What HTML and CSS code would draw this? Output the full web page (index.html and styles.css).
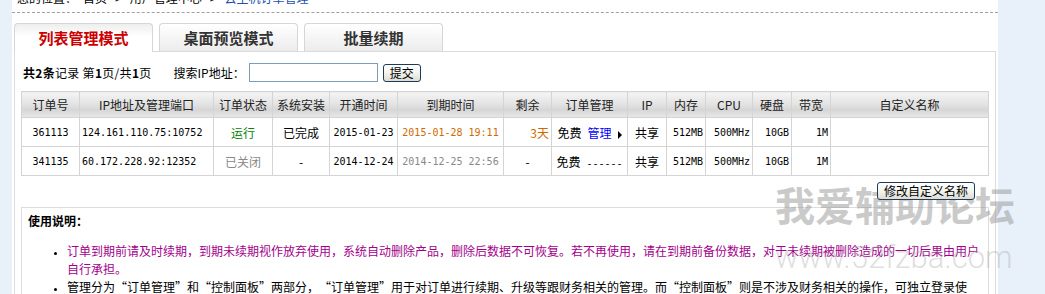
FILE: index.html
```html
<!DOCTYPE html>
<html lang="zh-CN">
  <head>
    <meta charset="UTF-8" />
    <title>云主机订单管理</title>
    <link rel="stylesheet" href="styles.css">
  </head>
  <body>
    <div class="main">
      <div class="crumb">
        <div class="crumb-text">
          您的位置：<span class="home">首页</span><span class="sep">&gt;</span>用户管理中心<span class="sep">&gt;</span><a href="#">云主机订单管理</a>
        </div>
      </div>

      <div class="tabs">
        <a class="tab active" href="#">列表管理模式</a>
        <a class="tab" href="#">桌面预览模式</a>
        <a class="tab" href="#">批量续期</a>
      </div>

      <div class="panel">
        <form class="toolbar" id="searchForm">
          <span class="pages"><b>共2条</b>记录 第<b>1</b>页/共<b>1</b>页</span>
          <label for="ip" class="search-label">搜索IP地址：</label>
          <input type="text" id="ip" />
          <button type="submit" class="btn">提交</button>
        </form>

        <table class="orders">
          <colgroup>
            <col class="c-id" />
            <col class="c-ip" />
            <col class="c-state" />
            <col class="c-os" />
            <col class="c-open" />
            <col class="c-due" />
            <col class="c-left" />
            <col class="c-manage" />
            <col class="c-ipt" />
            <col class="c-mem" />
            <col class="c-cpu" />
            <col class="c-disk" />
            <col class="c-bw" />
            <col class="c-name" />
          </colgroup>
          <thead>
            <tr>
              <th>订单号</th>
              <th>IP地址及管理端口</th>
              <th>订单状态</th>
              <th>系统安装</th>
              <th>开通时间</th>
              <th>到期时间</th>
              <th>剩余</th>
              <th>订单管理</th>
              <th>IP</th>
              <th>内存</th>
              <th>CPU</th>
              <th>硬盘</th>
              <th>带宽</th>
              <th>自定义名称</th>
            </tr>
          </thead>
          <tbody>
            <tr>
              <td class="num">361113</td>
              <td class="num left">124.161.110.75:10752</td>
              <td class="running">运行</td>
              <td>已完成</td>
              <td class="num">2015-01-23</td>
              <td class="num due">2015-01-28 19:11</td>
              <td class="right due">3天</td>
              <td>免费<a href="#" class="manage">管理</a><i class="arrow"></i></td>
              <td>共享</td>
              <td class="num right">512MB</td>
              <td class="num right">500MHz</td>
              <td class="num right">10GB</td>
              <td class="num right">1M</td>
              <td></td>
            </tr>
            <tr>
              <td class="num">341135</td>
              <td class="num left">60.172.228.92:12352</td>
              <td class="closed">已关闭</td>
              <td>-</td>
              <td class="num">2014-12-24</td>
              <td class="num closed">2014-12-25 22:56</td>
              <td>-</td>
              <td>免费<span class="num dashes">------</span></td>
              <td>共享</td>
              <td class="num right">512MB</td>
              <td class="num right">500MHz</td>
              <td class="num right">10GB</td>
              <td class="num right">1M</td>
              <td></td>
            </tr>
          </tbody>
        </table>

        <div class="actions">
          <button type="button" class="btn">修改自定义名称</button>
        </div>

        <div class="notice">
          <h4>使用说明：</h4>
          <ul>
            <li class="warn">订单到期前请及时续期，到期未续期视作放弃使用，系统自动删除产品，删除后数据不可恢复。若不再使用，请在到期前备份数据，对于未续期被删除造成的一切后果由用户自行承担。</li>
            <li>管理分为“订单管理”和“控制面板”两部分，“订单管理”用于对订单进行续期、升级等跟财务相关的管理。而“控制面板”则是不涉及财务相关的操作，可独立登录使用。</li>
          </ul>
        </div>
      </div>
    </div>

    <div class="watermark">
      <span class="wm-title">我爱辅助论坛</span>
      <span class="wm-url">www.52fzba.com</span>
    </div>

    <script>
      document.getElementById("searchForm").addEventListener("submit", function (e) {
        e.preventDefault();
      });
    </script>
  </body>
</html>
```

FILE: styles.css
```css
* {
  box-sizing: border-box;
  margin: 0;
  padding: 0;
}

html {
  overflow: hidden;
}

body {
  font-family: "Noto Sans CJK SC", sans-serif;
  font-size: 12px;
  color: #000;
  background: #e8f0fa;
}

a {
  text-decoration: none;
}

.main {
  width: 986px;
  min-height: 100vh;
  margin-left: 12px;
  background: #fff;
}

/* breadcrumb, only its lower edge is visible */
.crumb {
  display: flex;
  height: 13px;
  padding-left: 5px;
  border-bottom: 1px dashed #a0a0a0;
}

.crumb-text {
  margin-top: -8px;
  line-height: 12px;
  white-space: nowrap;
}

.crumb-text a {
  color: #1d4fb0;
}

.crumb .home {
  margin-left: 6px;
}

.crumb .sep {
  margin: 0 8px;
}

/* tabs */
.tabs {
  position: relative;
  z-index: 1;
  display: flex;
  align-items: flex-end;
  gap: 6px;
  padding: 10px 0 0 2px;
}

.tab {
  width: 139px;
  height: 28px;
  border: 1px solid #d6d6d6;
  border-bottom: none;
  border-radius: 4px 4px 0 0;
  background: linear-gradient(#fff, #ececec);
  color: #333;
  font-size: 15px;
  font-weight: bold;
  line-height: 27px;
  text-align: center;
}

.tab.active {
  height: 29px;
  margin-bottom: -1px;
  background: linear-gradient(#eeeeee, #fff 45%);
  color: #cc0000;
}

.panel {
  margin: 0 2px 0 2px;
  padding: 0 6px 30px;
  border: 1px solid #dcdcdc;
  min-height: 300px;
}

/* search line */
.toolbar {
  display: flex;
  align-items: center;
  height: 19px;
  margin-top: 11px;
}

.pages {
  margin-left: 2px;
  letter-spacing: 0.3px;
}

.search-label {
  margin-left: 22px;
}

.toolbar input {
  width: 129px;
  height: 19px;
  margin-left: 4px;
  padding: 0 2px;
  border: 1px solid #7f9db9;
  font-size: 12px;
}

.btn {
  position: relative;
  z-index: 2;
  height: 18px;
  padding: 0 6px;
  border: 1px solid #1e3c5a;
  border-radius: 3px;
  background: linear-gradient(#ffffff, #f4f4ef 50%, #dcdcd5);
  font-family: "Noto Sans CJK SC", sans-serif;
  font-size: 12px;
  line-height: 16px;
  color: #000;
  cursor: pointer;
}

.toolbar .btn {
  margin-left: 5px;
}

/* order table */
.orders {
  width: 967px;
  margin-top: 9px;
  border-collapse: collapse;
  table-layout: fixed;
}

.c-id { width: 58px; }
.c-ip { width: 134px; }
.c-state { width: 59px; }
.c-os { width: 57px; }
.c-open { width: 68px; }
.c-due { width: 106px; }
.c-left { width: 48px; }
.c-manage { width: 76px; }
.c-ipt { width: 39px; }
.c-mem { width: 39px; }
.c-cpu { width: 47px; }
.c-disk { width: 39px; }
.c-bw { width: 39px; }
.c-name { width: 158px; }

.orders th,
.orders td {
  padding: 0 2px;
  border: 1px solid #d4d4d4;
  text-align: center;
  white-space: nowrap;
  overflow: hidden;
}

.orders th {
  height: 26px;
  font-weight: normal;
  color: #222;
  background: linear-gradient(#f4f4f4, #e4e4e4 45%, #d6d6d6 70%, #e8e8e8);
}

.orders td {
  height: 29px;
}

.orders .num {
  font-family: "DejaVu Sans Mono", monospace;
  font-size: 10px;
}

.orders .left {
  text-align: left;
}

.orders .right {
  text-align: right;
}

.running {
  color: #088008;
}

.closed {
  color: #888;
}

.due {
  color: #d06a00;
}

.manage {
  margin-left: 6px;
  color: #0000ff;
}

.arrow {
  display: inline-block;
  margin-left: 6px;
  border-left: 4px solid #000;
  border-top: 4px solid transparent;
  border-bottom: 4px solid transparent;
  vertical-align: -1px;
}

.dashes {
  margin-left: 6px;
}

.actions {
  display: flex;
  justify-content: flex-end;
  padding: 6px 14px 7px 0;
}

/* notes */
.notice {
  padding: 4px 6px 10px;
  border: 1px solid #dcdcdc;
}

.notice h4 {
  font-size: 12px;
  line-height: 18px;
}

.notice ul {
  margin-top: 12px;
  padding-left: 39px;
}

.notice li {
  line-height: 18px;
  font-feature-settings: "fwid" 1;
  text-spacing-trim: space-all;
}

.notice li::marker {
  font-size: 9px;
  color: #000;
}

.notice .warn {
  color: #a3008c;
}

/* watermark stamped over the page */
.watermark {
  position: absolute;
  left: 775px;
  top: 184px;
  display: flex;
  flex-direction: column;
  pointer-events: none;
}

.wm-title {
  font-size: 40px;
  font-weight: bold;
  line-height: 40px;
  color: rgba(150, 150, 150, 0.5);
  white-space: nowrap;
}

.wm-url {
  margin-top: 18px;
  font-family: Roboto, "Open Sans", sans-serif;
  font-size: 31px;
  font-weight: 300;
  line-height: 31px;
  color: rgba(170, 170, 170, 0.4);
  white-space: nowrap;
}
```
